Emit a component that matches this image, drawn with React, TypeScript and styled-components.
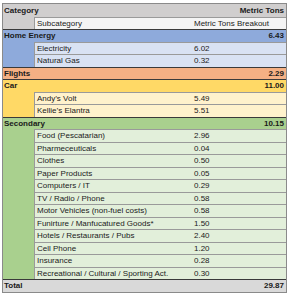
import React from "react";
import styled, { createGlobalStyle } from "styled-components";

const GlobalStyle = createGlobalStyle`
  html, body {
    margin: 0;
    padding: 0;
    background: #ffffff;
  }
  body {
    font-family: "Liberation Sans", Arial, sans-serif;
    font-size: 8px;
    color: #1a1a1a;
  }
`;

type Item = { name: string; value: string };
type Group = {
  title: string;
  total: string;
  main: string;
  light: string;
  items: Item[];
};

const groups: Group[] = [
  {
    title: "Home Energy",
    total: "6.43",
    main: "#8eaadb",
    light: "#d9e2f3",
    items: [
      { name: "Electricity", value: "6.02" },
      { name: "Natural Gas", value: "0.32" },
    ],
  },
  {
    title: "Flights",
    total: "2.29",
    main: "#f4b084",
    light: "#fbe4d5",
    items: [],
  },
  {
    title: "Car",
    total: "11.00",
    main: "#ffd966",
    light: "#fff2cc",
    items: [
      { name: "Andy\u2019s Volt", value: "5.49" },
      { name: "Kellie\u2019s Elantra", value: "5.51" },
    ],
  },
  {
    title: "Secondary",
    total: "10.15",
    main: "#a9d08e",
    light: "#e2efda",
    items: [
      { name: "Food (Pescatarian)", value: "2.96" },
      { name: "Pharmeceuticals", value: "0.04" },
      { name: "Clothes", value: "0.50" },
      { name: "Paper Products", value: "0.05" },
      { name: "Computers / IT", value: "0.29" },
      { name: "TV / Radio / Phone", value: "0.58" },
      { name: "Motor Vehicles (non-fuel costs)", value: "0.58" },
      { name: "Funirture / Manfucatured Goods*", value: "1.50" },
      { name: "Hotels / Restaurants / Pubs", value: "2.40" },
      { name: "Cell Phone", value: "1.20" },
      { name: "Insurance", value: "0.28" },
      { name: "Recreational / Cultural / Sporting Act.", value: "0.30" },
    ],
  },
];

const Page = styled.div`
  padding: 3px 0 0 2px;
`;

const Sheet = styled.div`
  width: 285px;
  box-sizing: border-box;
  border: 1px solid #8a8a8a;
  display: flex;
  flex-direction: column;
`;

const MainRow = styled.div<{ $bg: string; $first?: boolean }>`
  box-sizing: border-box;
  height: 12.5px;
  display: flex;
  align-items: center;
  justify-content: space-between;
  padding: 0 2px 0 1px;
  background: ${(p) => p.$bg};
  border-top: 1px solid ${(p) => (p.$first ? "transparent" : "#3a3a3a")};
  font-weight: bold;
  line-height: 11px;
`;

const SubList = styled.div<{ $bg: string }>`
  display: flex;
  flex-direction: column;
  padding-left: 31px;
  background: ${(p) => p.$bg};
`;

const SubRow = styled.div<{ $bg: string }>`
  box-sizing: border-box;
  height: 12.5px;
  display: grid;
  grid-template-columns: 158px 1fr;
  align-items: center;
  background: ${(p) => p.$bg};
  border-top: 1px solid #9a9a9a;
  border-left: 1px solid #9a9a9a;
  line-height: 11px;
  white-space: nowrap;
`;

const Label = styled.span`
  padding-left: 2px;
`;

const Value = styled.span`
  padding-left: 1px;
`;

const App = () => {
  return (
    <>
      <GlobalStyle />
      <Page>
        <Sheet>
          <MainRow $bg="#d0cece" $first>
            <span>Category</span>
            <span>Metric Tons</span>
          </MainRow>
          <SubList $bg="#d0cece">
            <SubRow $bg="#f4f4f4">
              <Label>Subcategory</Label>
              <Value>Metric Tons Breakout</Value>
            </SubRow>
          </SubList>
          {groups.map((g) => (
            <React.Fragment key={g.title}>
              <MainRow $bg={g.main}>
                <span>{g.title}</span>
                <span>{g.total}</span>
              </MainRow>
              {g.items.length > 0 && (
                <SubList $bg={g.main}>
                  {g.items.map((it) => (
                    <SubRow key={it.name} $bg={g.light}>
                      <Label>{it.name}</Label>
                      <Value>{it.value}</Value>
                    </SubRow>
                  ))}
                </SubList>
              )}
            </React.Fragment>
          ))}
          <MainRow $bg="#d9d9d9">
            <span>Total</span>
            <span>29.87</span>
          </MainRow>
        </Sheet>
      </Page>
    </>
  );
};

export default App;
